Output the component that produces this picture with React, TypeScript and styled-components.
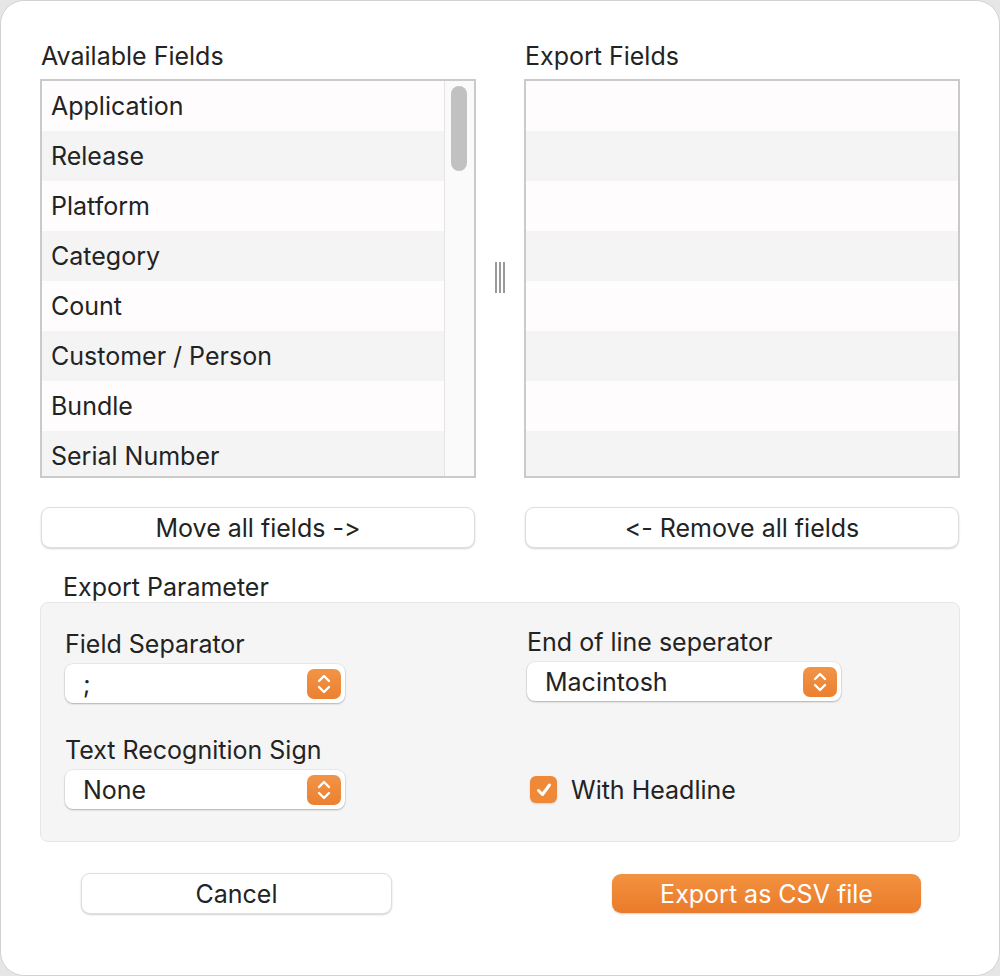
import styled, { createGlobalStyle } from 'styled-components';

const GlobalStyle = createGlobalStyle`
  html, body {
    margin: 0;
    padding: 0;
    background: #e6e6e6;
  }
  * {
    box-sizing: border-box;
  }
`;

const AVAILABLE = ['Application', 'Release', 'Platform', 'Category', 'Count', 'Customer / Person', 'Bundle', 'Serial Number'];
const ORANGE = '#ef8837';

function Stepper() {
  return (
    <StepperBox>
      <svg width="16" height="22" viewBox="0 0 16 22" fill="none" stroke="#fff" strokeWidth="2.4" strokeLinecap="round" strokeLinejoin="round">
        <polyline points="3,8 8,3 13,8" />
        <polyline points="3,14 8,19 13,14" />
      </svg>
    </StepperBox>
  );
}

function Select({ value, width }: { value: string; width: number }) {
  return (
    <SelectBox $width={width}>
      <SelectValue>{value}</SelectValue>
      <Stepper />
    </SelectBox>
  );
}

function App() {
  return (
    <>
      <GlobalStyle />
      <Window>
        <Lists>
          <Column>
            <Label>Available Fields</Label>
            <ListBox>
              <Rows>
                {AVAILABLE.map((name, i) => (
                  <Row key={name} $odd={i % 2 === 1}>
                    {name}
                  </Row>
                ))}
              </Rows>
              <ScrollTrack>
                <Thumb />
              </ScrollTrack>
            </ListBox>
            <Button>Move all fields -&gt;</Button>
          </Column>
          <Splitter>
            <Grip>
              <i />
              <i />
              <i />
            </Grip>
          </Splitter>
          <Column>
            <Label>Export Fields</Label>
            <ListBox>
              <Rows>
                {AVAILABLE.map((name, i) => (
                  <Row key={name} $odd={i % 2 === 1} />
                ))}
              </Rows>
            </ListBox>
            <Button>&lt;- Remove all fields</Button>
          </Column>
        </Lists>

        <GroupLabel>Export Parameter</GroupLabel>
        <Group>
          <Field>
            <FieldLabel>Field Separator</FieldLabel>
            <Select value=";" width={280} />
          </Field>
          <Field $shift={-2}>
            <FieldLabel>End of line seperator</FieldLabel>
            <Select value="Macintosh" width={314} />
          </Field>
          <Field>
            <FieldLabel>Text Recognition Sign</FieldLabel>
            <Select value="None" width={280} />
          </Field>
          <CheckRow>
            <CheckBox>
              <svg width="18" height="18" viewBox="0 0 18 18" fill="none" stroke="#fff" strokeWidth="3" strokeLinecap="round" strokeLinejoin="round">
                <polyline points="3.5,9.5 7.5,13.5 14.5,4" />
              </svg>
            </CheckBox>
            <CheckText>With Headline</CheckText>
          </CheckRow>
        </Group>

        <Footer>
          <FooterButton>Cancel</FooterButton>
          <PrimaryButton>Export as CSV file</PrimaryButton>
        </Footer>
      </Window>
    </>
  );
}

export default App;

const Window = styled.div`
  width: 1000px;
  height: 976px;
  background: #ffffff;
  border: 1px solid #d2d2d2;
  border-radius: 24px;
  padding: 40px 39px 0 39px;
  font-family: Inter, 'Liberation Sans', sans-serif;
  font-feature-settings: 'calt' 0, 'liga' 0;
  font-size: 25px;
  color: #232323;
  overflow: hidden;
`;

const Lists = styled.div`
  display: grid;
  grid-template-columns: 436px 48px 436px;
`;

const Column = styled.div`
  display: flex;
  flex-direction: column;
`;

const Label = styled.div`
  line-height: 30px;
  height: 38px;
  padding-left: 1px;
`;

const ListBox = styled.div`
  height: 399px;
  border: 2px solid #cacaca;
  display: flex;
  background: #fefcfd;
  overflow: hidden;
`;

const Rows = styled.div`
  flex: 1;
  display: flex;
  flex-direction: column;
`;

const Row = styled.div<{ $odd?: boolean }>`
  height: 50px;
  flex: none;
  padding-left: 9px;
  display: flex;
  align-items: center;
  background: ${(p) => (p.$odd ? '#f4f4f5' : '#fefcfd')};
`;

const ScrollTrack = styled.div`
  width: 30px;
  flex: none;
  border-left: 1px solid #e4e4e4;
  background: #fafafa;
  padding: 5px 0 0 6px;
`;

const Thumb = styled.div`
  width: 16px;
  height: 85px;
  border-radius: 8px;
  background: #c1c1c1;
`;

const Splitter = styled.div`
  display: flex;
  justify-content: center;
  padding-top: 221px;
`;

const Grip = styled.div`
  display: flex;
  gap: 2px;
  height: 31px;

  i {
    display: block;
    width: 2px;
    height: 100%;
    background: #9a9a9a;
  }
`;

const Button = styled.div`
  margin-top: 29px;
  margin-left: 1px;
  width: 434px;
  height: 41px;
  border-radius: 9px;
  background: #ffffff;
  border: 1px solid #dedede;
  box-shadow: 0 1px 2px rgba(0, 0, 0, 0.18);
  display: flex;
  align-items: center;
  justify-content: center;
`;

const GroupLabel = styled.div`
  line-height: 30px;
  margin: 24px 0 0 23px;
  height: 30px;
`;

const Group = styled.div`
  width: 920px;
  height: 240px;
  background: #f5f5f5;
  border: 1px solid #e6e6e6;
  border-radius: 8px;
  padding: 26px 24px 0 24px;
  display: grid;
  grid-template-columns: 462px 1fr;
  grid-template-rows: 106px 90px;
`;

const Field = styled.div<{ $shift?: number }>`
  display: flex;
  flex-direction: column;
  margin-top: ${(p) => p.$shift ?? 0}px;
`;

const FieldLabel = styled.div`
  line-height: 30px;
  height: 35px;
`;

const SelectBox = styled.div<{ $width: number }>`
  width: ${(p) => p.$width}px;
  height: 39px;
  background: #ffffff;
  border-radius: 8px;
  box-shadow: 0 0 0 0.5px rgba(0, 0, 0, 0.08), 0 1px 2px rgba(0, 0, 0, 0.25);
  display: flex;
  align-items: center;
  justify-content: space-between;
  padding: 0 4px 0 18px;
`;

const SelectValue = styled.div``;

const StepperBox = styled.div`
  width: 34px;
  height: 30px;
  border-radius: 7px;
  background: linear-gradient(#f19447, #ec8030);
  display: flex;
  align-items: center;
  justify-content: center;
`;

const CheckRow = styled.div`
  display: flex;
  align-items: center;
  gap: 14px;
  margin-top: 35px;
  padding-left: 3px;
  align-self: start;
  height: 39px;
`;

const CheckBox = styled.div`
  width: 27px;
  height: 27px;
  border-radius: 6px;
  background: ${ORANGE};
  box-shadow: 0 1px 2px rgba(0, 0, 0, 0.15);
  display: flex;
  align-items: center;
  justify-content: center;
`;

const CheckText = styled.div``;

const Footer = styled.div`
  display: flex;
  justify-content: space-between;
  padding: 0 39px 0 41px;
  margin-top: 31px;
`;

const FooterButton = styled.div`
  width: 311px;
  height: 41px;
  border-radius: 9px;
  background: #ffffff;
  border: 1px solid #dedede;
  box-shadow: 0 1px 2px rgba(0, 0, 0, 0.18);
  display: flex;
  align-items: center;
  justify-content: center;
`;

const PrimaryButton = styled(FooterButton)`
  width: 309px;
  height: 39px;
  margin-top: 1px;
  border: none;
  color: #ffffff;
  background: linear-gradient(#f2923f, #ea7b2b);
`;
